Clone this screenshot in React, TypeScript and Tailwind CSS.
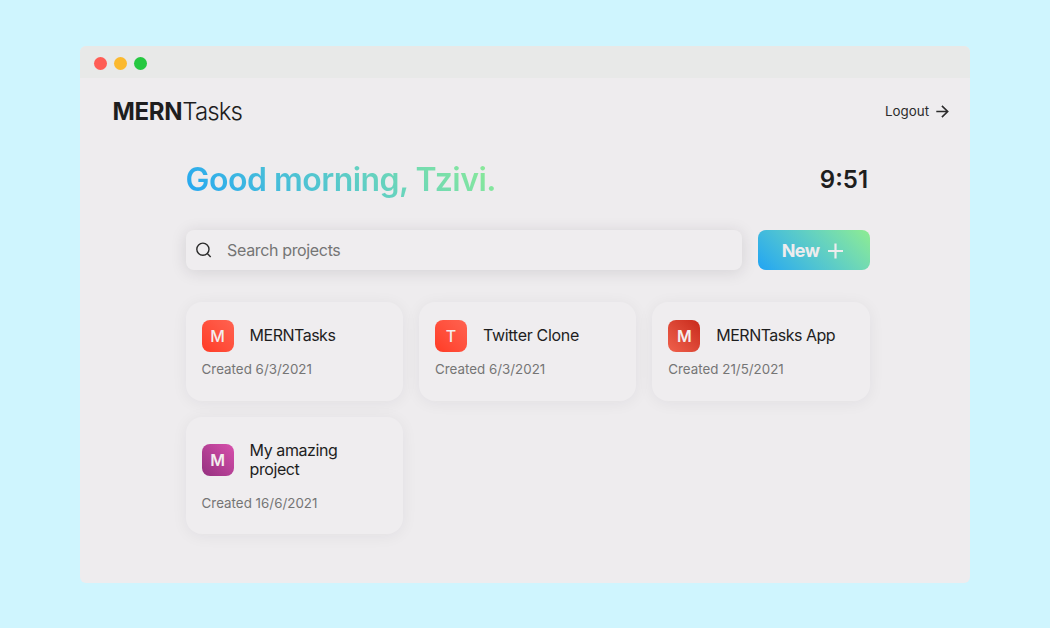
import React from "react";

type Project = { name: string; created: string; color: string; weight: string; tracking: string };

const projects: Project[] = [
  { name: "MERNTasks", created: "6/3/2021", color: "from-[#ff3a24] to-[#ff6250]", weight: "font-medium", tracking: "tracking-[-0.5px]" },
  { name: "Twitter Clone", created: "6/3/2021", color: "from-[#ff3a24] to-[#ff6250]", weight: "font-medium", tracking: "tracking-[-0.3px]" },
  { name: "MERNTasks App", created: "21/5/2021", color: "from-[#f0604c] to-[#c8281a]", weight: "font-semibold", tracking: "tracking-[-0.5px]" },
  { name: "My amazing project", created: "16/6/2021", color: "from-[#94307f] to-[#d850ac]", weight: "font-semibold", tracking: "tracking-[-0.42px]" },
];

function SearchIcon() {
  return (
    <svg width="16" height="16" viewBox="0 0 16 16" fill="none" stroke="#2b2b2b" strokeWidth="1.4">
      <circle cx="6.9" cy="7.2" r="6.1" />
      <path d="M11.3 11.6L14.7 15" />
    </svg>
  );
}

function ArrowIcon() {
  return (
    <svg width="14" height="14" viewBox="0 0 14 14" fill="none" stroke="#2b2b2b" strokeWidth="1.6">
      <path d="M0.3 6.5H11.7M5.9 0.9L11.7 6.5L5.9 12.1" />
    </svg>
  );
}

function PlusIcon() {
  return (
    <svg width="16" height="16" viewBox="0 0 16 16" fill="none" stroke="#eeecee" strokeWidth="2.2">
      <path d="M8.5 0.6V15.4M1 8H16" />
    </svg>
  );
}

function ProjectCard({ name, created, color, weight, tracking }: Project) {
  return (
    <article className="rounded-2xl bg-[#efedef] px-4 pt-2 pb-[22.5px] shadow-[0_2px_16px_rgba(40,30,45,0.06)]">
      <div className="flex items-center gap-4">
        <div
          className={`flex size-8 shrink-0 items-center justify-center rounded-lg bg-linear-45 text-base text-[#f3eeee] ${weight} ${color}`}
        >
          {name[0]}
        </div>
        <h2 className={`my-4 max-w-[124px] text-base leading-[19px] text-[#1e1e1e] ${tracking}`}>{name}</h2>
      </div>
      <p className="text-[13.33px] leading-[17px] tracking-[0.02px] text-[#757575]">Created {created}</p>
    </article>
  );
}

export default function App() {
  return (
    <div className="h-[628px] w-[1050px] overflow-hidden bg-[#cff5fe] px-20 pt-[46px] font-['Inter',sans-serif]">
      <div className="h-[537px] w-[890px] overflow-hidden rounded-md bg-[#eeecee]">
        <div className="flex h-8 items-center gap-[7px] bg-[#e8e9e8] pt-[2px] pl-[13.5px]">
          <span className="size-[13px] rounded-full bg-[#ff5d55]" />
          <span className="size-[13px] rounded-full bg-[#fbb92e]" />
          <span className="size-[13px] rounded-full bg-[#25c840]" />
        </div>
        <header className="flex h-[68px] items-center justify-between pr-[20.5px] pl-[32.5px] text-[#1e1e1e]">
          <div className="text-2xl">
            <span className="font-bold tracking-[-0.3px]">MERN</span>
            <span className="font-light tracking-[-0.9px]">Tasks</span>
          </div>
          <button className="flex items-center gap-[6.5px] text-[13.33px] text-[#2b2b2b]">
            Logout
            <ArrowIcon />
          </button>
        </header>
        <main className="mr-[100.4px] ml-[105.6px]">
          <div className="flex h-[68px] items-center justify-between">
            <h1 className="bg-linear-45 from-[#20a4f3] to-[#8eec90] bg-clip-text text-[32px] font-semibold tracking-[-0.53px] text-transparent">
              Good morning, Tzivi.
            </h1>
            <time className="pr-[1.5px] text-2xl font-semibold text-[#1e1e1e]">9:51</time>
          </div>
          <div className="mt-4 flex gap-4">
            <label className="flex h-10 flex-1 items-center gap-[15.5px] rounded-lg bg-[#efedef] pl-2.5 shadow-[0_2px_16px_rgba(40,30,45,0.13)]">
              <SearchIcon />
              <input
                className="flex-1 bg-transparent text-base tracking-[-0.35px] outline-none placeholder:text-[#757575]"
                placeholder="Search projects"
              />
            </label>
            <button className="flex h-10 w-28 items-center justify-center gap-2 rounded-lg bg-linear-45 from-[#20a4f3] to-[#8eec90] pt-px pr-[2px] text-lg font-bold tracking-[-0.6px] text-[#eeecee]">
              New
              <PlusIcon />
            </button>
          </div>
          <section className="mt-8 grid grid-cols-3 items-start gap-4">
            {projects.map((project) => (
              <ProjectCard key={project.name} {...project} />
            ))}
          </section>
        </main>
      </div>
    </div>
  );
}
